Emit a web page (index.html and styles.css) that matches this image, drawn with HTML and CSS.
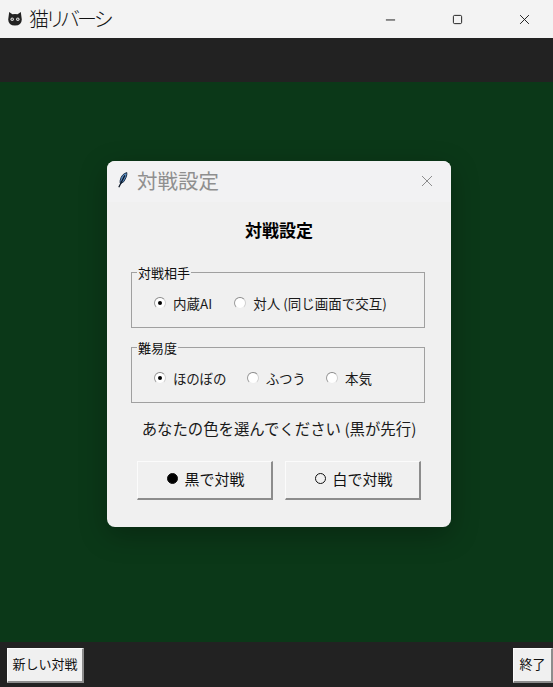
FILE: index.html
```html
<!DOCTYPE html>
<html lang="ja">
<head>
<meta charset="utf-8">
<title>猫リバーシ</title>
<link rel="stylesheet" href="styles.css">
</head>
<body>
<div class="app">
  <header class="titlebar">
    <svg class="cat" viewBox="0 0 16 16"><path d="M2.2 1 L5.4 3.3 Q8 2.8 10.6 3.3 L13.8 1 L14.8 8.6 Q14.6 14.6 8 14.6 Q1.4 14.6 1.2 8.6 Z" fill="#222"/><circle cx="5.2" cy="8.2" r="1.7" fill="#ddd"/><circle cx="10.8" cy="8.2" r="1.7" fill="#ddd"/><circle cx="5.2" cy="8.2" r="0.7" fill="#222"/><circle cx="10.8" cy="8.2" r="0.7" fill="#222"/></svg>
    <span class="app-title">猫リバーシ</span>
    <div class="win-controls">
      <span class="ctl"><svg viewBox="0 0 12 12"><path d="M1 6.5H11" stroke="#111" stroke-width="1"/></svg></span>
      <span class="ctl"><svg viewBox="0 0 12 12"><rect x="1.5" y="1.5" width="9" height="9" rx="1.4" fill="none" stroke="#111" stroke-width="1"/></svg></span>
      <span class="ctl"><svg viewBox="0 0 12 12"><path d="M1.2 1.2L10.8 10.8M10.8 1.2L1.2 10.8" stroke="#111" stroke-width="1"/></svg></span>
    </div>
  </header>
  <div class="topbar"></div>
  <main class="board"></main>
  <footer class="bottombar">
    <button class="tk-btn">新しい対戦</button>
    <button class="tk-btn">終了</button>
  </footer>

  <section class="dialog">
    <div class="dlg-title">
      <svg class="feather" viewBox="0 0 10 16"><path d="M8.8 0.6 Q3.4 2 2.2 8.4 Q1.8 10.8 2.6 11.6 Q6.4 10.6 8 5.6 Q9.2 2.4 8.8 0.6 Z" fill="#5c8fc4" stroke="#10233a" stroke-width="0.9"/><path d="M6.8 3.4 L0.8 15.2" stroke="#0b1524" stroke-width="1.3"/></svg>
      <span class="dlg-title-text">対戦設定</span>
      <svg class="dlg-close" viewBox="0 0 12 12"><path d="M1 1L11 11M11 1L1 11" stroke="#8d8d8d" stroke-width="1"/></svg>
    </div>
    <div class="dlg-body">
      <h1 class="heading">対戦設定</h1>
      <fieldset class="group">
        <legend>対戦相手</legend>
        <div class="radios">
          <label class="radio"><span class="dot on"></span>内蔵AI</label>
          <label class="radio"><span class="dot"></span>対人 (同じ画面で交互)</label>
        </div>
      </fieldset>
      <fieldset class="group">
        <legend>難易度</legend>
        <div class="radios tight">
          <label class="radio"><span class="dot on"></span>ほのぼの</label>
          <label class="radio"><span class="dot"></span>ふつう</label>
          <label class="radio"><span class="dot"></span>本気</label>
        </div>
      </fieldset>
      <p class="prompt">あなたの色を選んでください (黒が先行)</p>
      <div class="choices">
        <button class="tk-btn choice"><span class="stone black"></span>黒で対戦</button>
        <button class="tk-btn choice"><span class="stone white"></span>白で対戦</button>
      </div>
    </div>
  </section>
</div>
</body>
</html>
```
FILE: styles.css
```css
* { box-sizing: border-box; }
html, body { margin: 0; padding: 0; height: 100%; }
body { font-family: "Noto Sans CJK JP", "Liberation Sans", sans-serif; color: #111; }
.app { position: relative; width: 553px; height: 687px; display: flex; flex-direction: column; overflow: hidden; }

.titlebar { height: 38px; background: #f3f3f3; display: flex; align-items: center; padding-left: 7px; flex: none; }
.cat { width: 16px; height: 16px; margin-right: 6px; }
.app-title { font-size: 20px; font-weight: 300; color: #111; line-height: 1; font-feature-settings: "palt"; letter-spacing: -2.4px; }
.win-controls { margin-left: auto; display: flex; margin-right: -5px; }
.ctl { width: 67px; height: 38px; display: flex; align-items: center; justify-content: center; }
.ctl svg { width: 11px; height: 11px; }

.topbar { height: 44px; background: #222222; flex: none; }
.board { flex: 1; background: #0b3818; }
.bottombar { height: 45px; background: #222222; flex: none; display: flex; justify-content: space-between; align-items: flex-start; padding-top: 6px; padding-left: 7px; }

.tk-btn {
  font-family: inherit; color: #111; background: #f0f0f0; padding: 0 0 3px; border: 0; border-radius: 0;
  border-right: 2px solid #8c8c8c; border-bottom: 2px solid #8c8c8c;
  border-top: 1px solid #fbfbfb; border-left: 1px solid #fbfbfb;
  font-size: 13px; height: 35px;
}
.bottombar .tk-btn:first-child { width: 77px; }
.bottombar .tk-btn:last-child { width: 40px; }

.dialog {
  position: absolute; left: 107px; top: 161px; width: 344px; height: 366px;
  background: #f0f0f0; border-radius: 8px; overflow: hidden;
  box-shadow: 0 8px 28px rgba(0, 0, 0, 0.28);
}
.dlg-title { height: 41px; background: #f2f2f3; display: flex; align-items: center; padding-left: 11px; padding-right: 18px; }
.feather { width: 10px; height: 16px; margin-right: 9px; margin-top: -3px; }
.dlg-title-text { font-size: 20.5px; color: #8f8f8f; line-height: 1; font-weight: 400; margin-top: -2px; }
.dlg-close { width: 12px; height: 12px; margin-left: auto; margin-top: -2px; }

.dlg-body { padding: 0 24px; display: flex; flex-direction: column; }
.heading { font-size: 17px; font-weight: 700; text-align: center; margin: 16px 0 0; line-height: 24px; height: 24px; color: #000; }
.group { margin: 0 2px 0 0; padding: 0; border: 1px solid #a0a0a0; min-width: 0; }
.group:first-of-type { margin-top: 22px; height: 64px; }
.group + .group { margin-top: 11px; height: 64px; }
.group legend { font-size: 13px; line-height: 17px; padding: 0 1px; margin-left: 5px; color: #111; }
.radios { display: flex; padding: 12px 0 0 22px; }
.radio { font-size: 13.5px; line-height: 20px; display: flex; align-items: center; margin-right: 22px; color: #1a1a1a; }
.tight .radio { margin-right: 20.5px; letter-spacing: -0.2px; }
.dot { width: 12px; height: 12px; border-radius: 50%; background: #fff; border: 1px solid; border-color: #8a8a8a #cfcfcf #eeeeee #9a9a9a; margin-right: 7px; position: relative; flex: none; }
.dot.on::after { content: ""; position: absolute; left: 3px; top: 3px; width: 4px; height: 4px; border-radius: 50%; background: #000; }

.prompt { font-size: 15.4px; line-height: 20px; margin: 15px 0 0; text-align: center; color: #1a1a1a; }
.choices { display: flex; gap: 12px; margin: 23px 0 0 6px; }
.choice { width: 136px; height: 39px; font-size: 15px; display: flex; align-items: center; justify-content: center; padding-left: 3px; }
.stone { width: 11px; height: 11px; border-radius: 50%; margin-right: 6px; border: 1px solid #111; flex: none; }
.stone.black { background: #000; }
```
